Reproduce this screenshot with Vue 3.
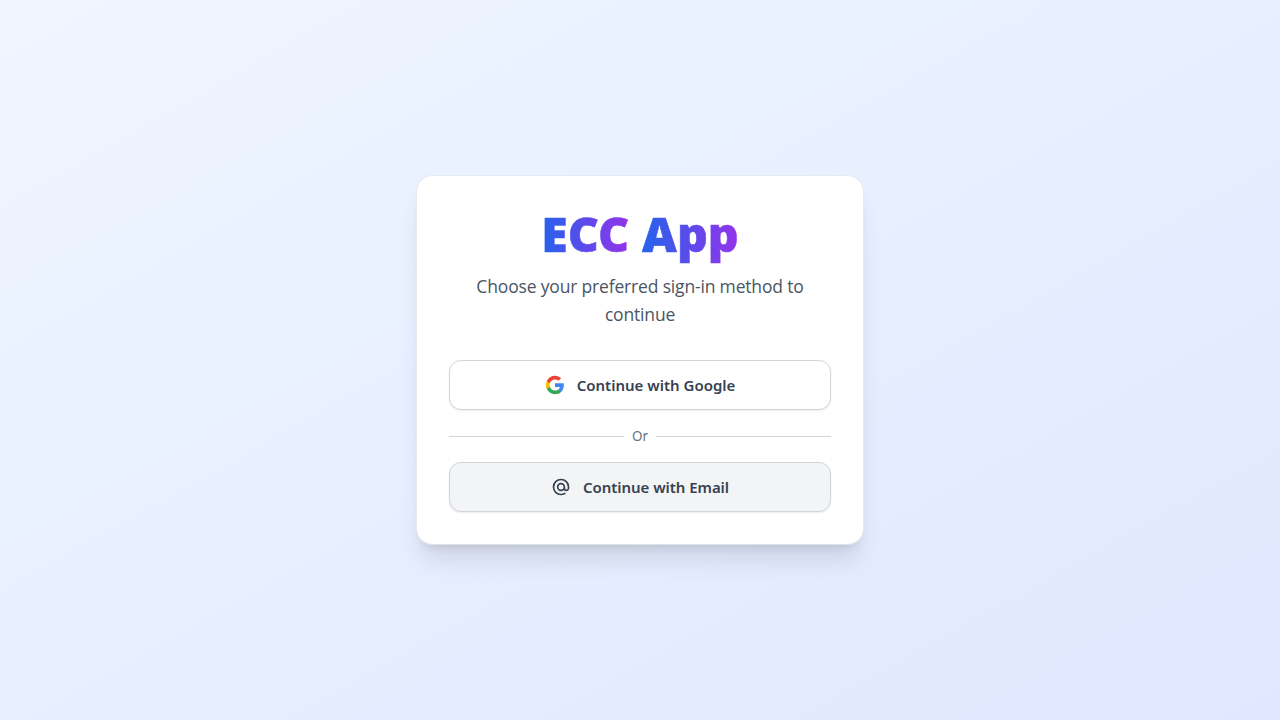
<script setup>
const words = ['ECC', 'App']
</script>

<template>
  <main class="page">
    <section class="card">
      <header class="head">
        <h1><span v-for="w in words" :key="w" class="word">{{ w }}</span></h1>
        <p>Choose your preferred sign-in method to<br />continue</p>
      </header>
      <button class="btn">
        <svg viewBox="0 0 24 24" width="20" height="20">
          <path fill="#4285F4" d="M22.56 12.25c0-.78-.07-1.53-.2-2.25H12v4.26h5.92c-.26 1.37-1.04 2.53-2.21 3.31v2.77h3.57c2.08-1.92 3.28-4.74 3.28-8.09z" />
          <path fill="#34A853" d="M12 23c2.97 0 5.46-.98 7.28-2.66l-3.57-2.77c-.98.66-2.23 1.06-3.71 1.06-2.86 0-5.29-1.93-6.16-4.53H2.18v2.84C3.99 20.53 7.7 23 12 23z" />
          <path fill="#FBBC05" d="M5.84 14.09c-.22-.66-.35-1.36-.35-2.09s.13-1.43.35-2.09V7.07H2.18C1.43 8.55 1 10.22 1 12s.43 3.45 1.18 4.93l2.85-2.22.81-.62z" />
          <path fill="#EA4335" d="M12 5.38c1.62 0 3.06.56 4.21 1.64l3.15-3.15C17.45 2.09 14.97 1 12 1 7.7 1 3.99 3.47 2.18 7.07l3.66 2.84c.87-2.6 3.3-4.53 6.16-4.53z" />
        </svg>
        <span>Continue with Google</span>
      </button>
      <div class="or"><span>Or</span></div>
      <button class="btn gray">
        <svg viewBox="0 0 24 24" width="20" height="20" fill="none" stroke="currentColor" stroke-width="2" stroke-linecap="round" stroke-linejoin="round">
          <path d="M16 12a4 4 0 10-8 0 4 4 0 008 0zm0 0v1.5a2.5 2.5 0 005 0V12a9 9 0 10-9 9m4.5-1.206a8.959 8.959 0 01-4.5 1.207" />
        </svg>
        <span class="email">Continue with Email</span>
      </button>
    </section>
  </main>
</template>

<style>
body { margin: 0; }
</style>

<style scoped>
.page {
  box-sizing: border-box;
  height: 720px;
  display: flex;
  align-items: center;
  justify-content: center;
  background: linear-gradient(to bottom right, #eff6ff, #e0e7ff);
  font-family: "Noto Sans", "Open Sans", sans-serif;
}
.card {
  box-sizing: border-box;
  width: 448px;
  height: 370px;
  padding: 32px;
  border: 1px solid rgba(229, 231, 235, 0.8);
  border-radius: 16px;
  background: #fff;
  background-clip: padding-box;
  box-shadow: 0 20px 25px -5px rgba(0, 0, 0, 0.1), 0 8px 10px -6px rgba(0, 0, 0, 0.1);
}
.head { text-align: center; height: 120px; margin-bottom: 32px; }
h1 {
  margin: 0;
  height: 64px;
  display: flex;
  justify-content: center;
  gap: 13px;
  font-size: 48px;
  line-height: 52px;
  font-weight: 900;
}
.word {
  height: 64px;
  background: linear-gradient(to right, #2563eb, #9333ea);
  background-clip: text;
  -webkit-background-clip: text;
  -webkit-text-stroke: 0.6px transparent;
  color: transparent;
}
p {
  margin: 0;
  font-family: "Open Sans", sans-serif;
  font-size: 17.5px;
  letter-spacing: -0.17px;
  line-height: 28px;
  color: #4b5563;
  white-space: nowrap;
}
.btn {
  box-sizing: border-box;
  width: 100%;
  height: 50px;
  display: flex;
  align-items: center;
  justify-content: center;
  gap: 12px;
  padding: 0;
  border: 1px solid #d1d5db;
  border-radius: 12px;
  background: #fff;
  color: #374151;
  font: 600 15px/24px "Noto Sans", "Open Sans", sans-serif;
  box-shadow: 0 1px 2px rgba(0, 0, 0, 0.08);
}
.btn svg { flex: none; }
.btn span { white-space: nowrap; }
.email { letter-spacing: -0.04px; }
.gray { background: #f3f4f6; }
.or {
  height: 20px;
  margin: 16px 0;
  display: flex;
  align-items: center;
  gap: 8px;
  font-size: 13.5px;
  line-height: 20px;
  color: #6b7280;
}
.or::before, .or::after { content: ""; flex: 1; height: 1px; background: #d1d5db; }
</style>
